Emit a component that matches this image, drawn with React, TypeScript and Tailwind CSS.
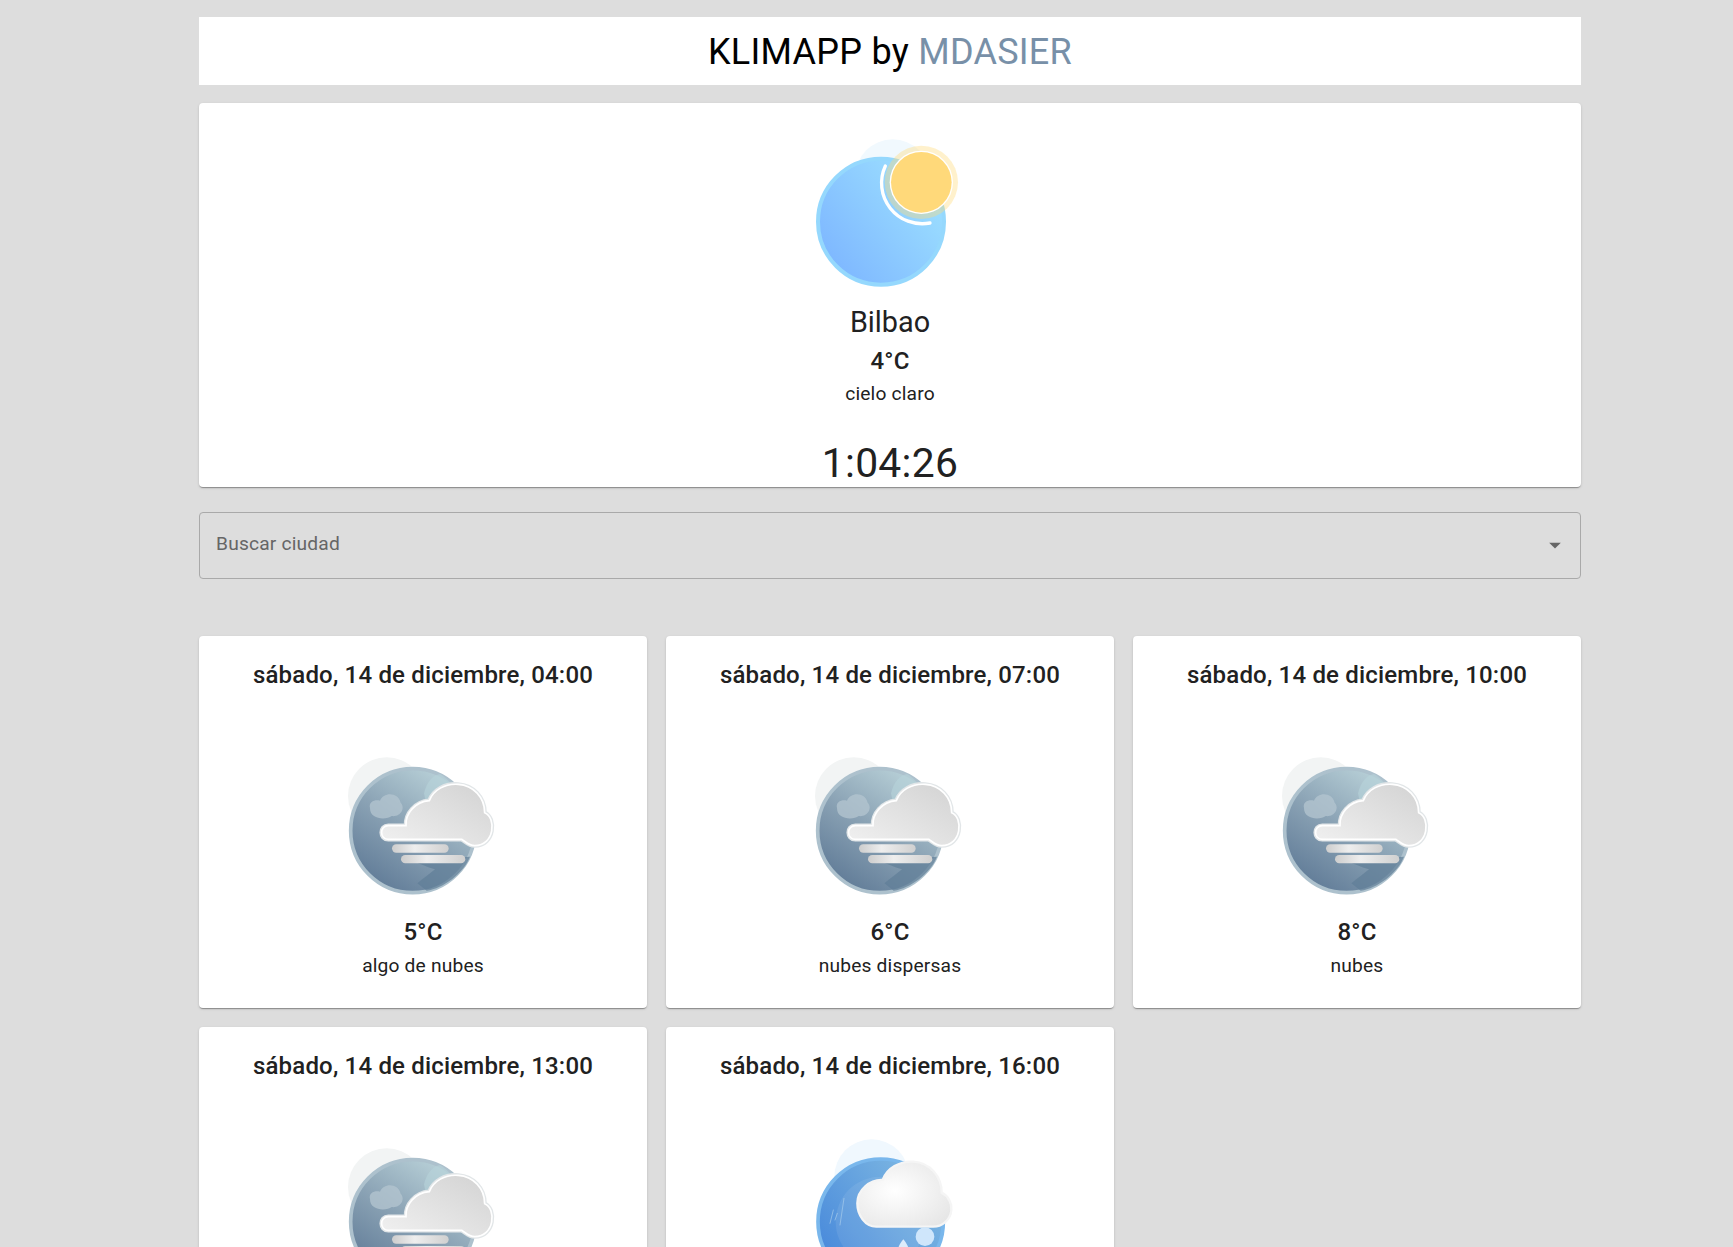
const elevation =
  "shadow-[0_2px_1px_-1px_rgba(0,0,0,0.2),0_1px_1px_0_rgba(0,0,0,0.14),0_1px_3px_0_rgba(0,0,0,0.12)]";

const fogCloudPath =
  "M175 257 L 228 257 C 225 222, 255 185, 298 182 C 310 150, 345 130, 385 133 C 430 136, 464 172, 464 218 C 499 232, 495 317, 434 317 C 417 317, 408 306, 395 298 L 175 298 C 148 298, 148 257, 175 257 Z";

function SunIcon() {
  return (
    <svg width="200" height="190" viewBox="30 0 600 570" className="block">
      <defs>
        <linearGradient id="sky" x1="0.1" y1="0.9" x2="0.95" y2="0.25">
          <stop offset="0" stopColor="#7db6ff" />
          <stop offset="1" stopColor="#9cdfff" />
        </linearGradient>
      </defs>
      <circle cx="338" cy="170" r="112" fill="#f1f9fe" />
      <circle cx="303" cy="305" r="189" fill="url(#sky)" stroke="#95d8fd" strokeWidth="12" />
      <circle cx="424" cy="187" r="110" fill="#ffd97a" fillOpacity="0.38" />
      <path d="M316 138 A 122 122 0 0 0 450 309" fill="none" stroke="#ffffff" strokeWidth="10" strokeLinecap="round" />
      <circle cx="424" cy="187" r="95" fill="#ffffff" />
      <circle cx="424" cy="187" r="91" fill="#ffd97a" />
    </svg>
  );
}

function FogIcon() {
  return (
    <svg width="180" height="170" viewBox="9 0 540 510" className="block">
      <defs>
        <linearGradient id="fogSky" x1="0.2" y1="0.95" x2="0.8" y2="0.05">
          <stop offset="0" stopColor="#607b97" />
          <stop offset="0.5" stopColor="#8ba3b5" />
          <stop offset="1" stopColor="#bad2d9" />
        </linearGradient>
        <linearGradient id="fogCloud" x1="0" y1="1" x2="1" y2="0">
          <stop offset="0" stopColor="#f1f1f1" />
          <stop offset="1" stopColor="#d2d2d2" />
        </linearGradient>
        <linearGradient id="fogBar" x1="0" y1="0" x2="1" y2="0">
          <stop offset="0" stopColor="#cdcdcd" />
          <stop offset="0.4" stopColor="#eeeeee" />
          <stop offset="1" stopColor="#d0d0d0" />
        </linearGradient>
      </defs>
      <circle cx="170" cy="168" r="116" fill="#f2f4f4" />
      <circle cx="248" cy="272" r="186" fill="url(#fogSky)" stroke="#adc1cd" strokeWidth="11" />
      <path d="M282 160 C 290 125, 310 105, 330 102 C 370 125, 390 170, 370 200 L 290 200 Z" fill="#b7d3da" fillOpacity="0.6" />
      <path d="M262 430 C 280 415, 300 400, 315 388 C 290 380, 270 372, 250 362 L 420 350 C 400 400, 340 445, 290 452 Z" fill="#5f7d97" fillOpacity="0.7" />
      <path d="M120 205 C 115 185, 135 178, 150 182 C 160 155, 205 155, 212 188 C 228 205, 210 232, 185 228 C 170 240, 120 240, 120 205 Z" fill="#b4c6d0" fillOpacity="0.75" />
      <path d={fogCloudPath} fill="none" stroke="#e2e6e8" strokeWidth="13" />
      <path d={fogCloudPath} fill="url(#fogCloud)" stroke="#ffffff" strokeWidth="5" />
      <rect x="186" y="313" width="170" height="25" rx="12.5" fill="url(#fogBar)" />
      <rect x="213" y="345" width="193" height="25" rx="12.5" fill="url(#fogBar)" />
    </svg>
  );
}

function RainIcon() {
  return (
    <svg width="180" height="170" viewBox="30 33 540 510" className="block">
      <defs>
        <linearGradient id="rainSky" x1="0.1" y1="0.8" x2="0.9" y2="0.2">
          <stop offset="0" stopColor="#4a8bdb" />
          <stop offset="1" stopColor="#7db7e2" />
        </linearGradient>
        <radialGradient id="rainCloud" cx="0.4" cy="0.45" r="0.7">
          <stop offset="0" stopColor="#ffffff" />
          <stop offset="1" stopColor="#e6e6e6" />
        </radialGradient>
      </defs>
      <circle cx="245" cy="170" r="112" fill="#f0f8fe" />
      <circle cx="272" cy="305" r="188" fill="url(#rainSky)" stroke="#79b7ec" strokeWidth="11" />
      <circle cx="272" cy="305" r="135" fill="#ffffff" fillOpacity="0.08" />
      <path d="M120 310 L 130 270 M 150 315 L 162 235 M 135 300 L 142 280" stroke="#a9cdec" strokeWidth="2" strokeLinecap="round" />
      <path
        d="M262 320 C 225 322, 202 285, 202 250 C 202 210, 240 178, 278 180 C 290 145, 330 122, 370 125 C 420 128, 455 170, 455 218 C 475 228, 486 250, 484 270 C 482 300, 455 320, 430 320 Z"
        fill="url(#rainCloud)"
        stroke="#f5f5f5"
        strokeWidth="7"
      />
      <circle cx="405" cy="350" r="28" fill="#cfe6fb" />
      <path d="M340 358 C 330 370, 320 385, 325 400 L 355 400 C 360 385, 350 370, 340 358 Z" fill="#dcecfb" />
    </svg>
  );
}

// the last two cards run off the bottom of the window, their temp and text are not visible
type Forecast = { date: string; temp?: string; text?: string; icon: "fog" | "rain" };

const forecast: Forecast[] = [
  { date: "sábado, 14 de diciembre, 04:00", temp: "5°C", text: "algo de nubes", icon: "fog" },
  { date: "sábado, 14 de diciembre, 07:00", temp: "6°C", text: "nubes dispersas", icon: "fog" },
  { date: "sábado, 14 de diciembre, 10:00", temp: "8°C", text: "nubes", icon: "fog" },
  { date: "sábado, 14 de diciembre, 13:00", icon: "fog" },
  { date: "sábado, 14 de diciembre, 16:00", icon: "rain" },
];

function ForecastCard({ item }: { item: Forecast }) {
  return (
    <div className={`flex h-[372px] flex-col items-center rounded-[4px] bg-white pt-[25px] ${elevation}`}>
      <h3 className="text-[24px] leading-[28px] font-medium tracking-[0.0075em] text-[#212121]">{item.date}</h3>
      <div className="mt-[51px]">{item.icon === "fog" ? <FogIcon /> : <RainIcon />}</div>
      {item.temp && (
        <p className="mt-[6px] text-[24px] leading-[32px] font-medium tracking-[0.0075em] text-[#212121]">{item.temp}</p>
      )}
      {item.text && (
        <p className="mt-[5px] text-[19.2px] leading-[26px] tracking-[0.00938em] text-[#212121]">{item.text}</p>
      )}
    </div>
  );
}

export default function App() {
  return (
    <div className="h-screen overflow-hidden bg-[#dddddd] pt-[17px] pr-[152px] pl-[199px] font-['Roboto',sans-serif] text-[#212121]">
      <header className="flex h-[68px] items-center justify-center bg-white">
        <h1 className="mt-[2px] text-[36px] leading-none tracking-[0.00735em] text-black">
          KLIMAPP by <span className="text-[#7890a8]">MDASIER</span>
        </h1>
      </header>

      <section className={`mt-[18px] flex h-[384px] flex-col items-center rounded-[4px] bg-white pt-[17px] ${elevation}`}>
        <SunIcon />
        <h2 className="mt-[-6px] text-[28.8px] leading-[36px]">Bilbao</h2>
        <p className="mt-[5px] text-[24px] leading-[32px] font-medium tracking-[0.0075em]">4°C</p>
        <p className="mt-[4px] text-[19.2px] leading-[26px] tracking-[0.00938em]">cielo claro</p>
        <p className="mt-[32px] text-[40.8px] leading-[48px] tracking-[0.00735em]">1:04:26</p>
      </section>

      <div className="mt-[25px] flex h-[67px] items-center justify-between rounded-[4px] border border-[#a9a9a9] pr-[11px] pl-[16px]">
        <span className="mb-[3px] text-[19.2px] tracking-[0.00938em] text-[#666666]">Buscar ciudad</span>
        <svg width="28" height="28" viewBox="0 0 24 24" fill="#666666" className="mb-[1px]">
          <path d="M7 10l5 5 5-5z" />
        </svg>
      </div>

      <div className="mt-[57px] grid grid-cols-3 gap-[19px]">
        {forecast.map((item) => (
          <ForecastCard key={item.date} item={item} />
        ))}
      </div>
    </div>
  );
}
